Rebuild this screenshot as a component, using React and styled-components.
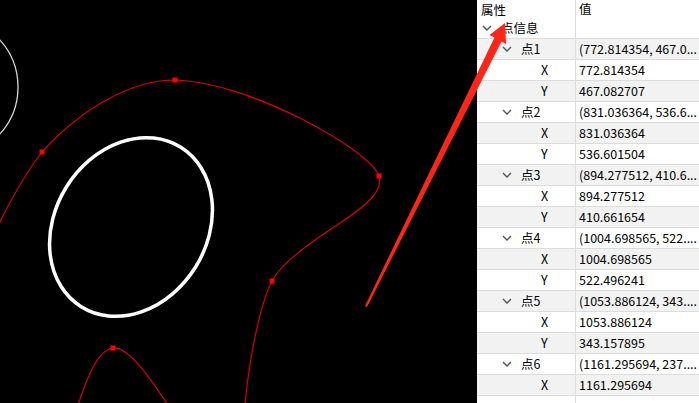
import React from "react"
import styled, { createGlobalStyle } from "styled-components"

const GlobalStyle = createGlobalStyle`
  html, body {
    margin: 0;
    padding: 0;
    background: #fff;
    overflow: hidden;
  }
`

const Screen = styled.div`
  position: relative;
  width: 699px;
  height: 403px;
  display: flex;
  overflow: hidden;
  font-family: "Noto Sans CJK SC", "Noto Sans", sans-serif;
  font-size: 12.5px;
  color: #000;
`

const Canvas = styled.svg`
  display: block;
  width: 477px;
  height: 403px;
  flex: none;
  background: #000;
`

const Grid = styled.div`
  flex: 1;
  display: flex;
  flex-direction: column;
  background: #fff;
  min-width: 0;
`

const Row = styled.div`
  display: grid;
  grid-template-columns: 99px 1fr;
  height: ${p => (p.$header ? "18px" : "20px")};
  flex: none;
  background: ${p => (p.$shade ? "#f2f2f2" : "#fff")};
  border-bottom: ${p => (p.$header ? "none" : "1px solid #dcdcdc")};
`

const NameCell = styled.div`
  display: flex;
  align-items: center;
  padding-left: ${p => 4 + p.$level * 20}px;
  border-right: 1px solid #dcdcdc;
  white-space: nowrap;
  line-height: ${p => (p.$header ? "17px" : "20px")};
  align-self: stretch;
`

const ValueCell = styled.div`
  padding-left: 3px;
  white-space: nowrap;
  overflow: hidden;
  line-height: ${p => (p.$header ? "17px" : "20px")};
`

const Toggle = styled.svg`
  width: 12px;
  height: 8px;
  margin-right: 8px;
  flex: none;
`

const Spacer = styled.span`
  display: inline-block;
  width: 20px;
  flex: none;
`

const Overlay = styled.svg`
  position: absolute;
  left: 0;
  top: 0;
  width: 699px;
  height: 403px;
  pointer-events: none;
`

const rows = [
  { name: "点信息", level: 0, open: true, value: "" },
  { name: "点1", level: 1, open: true, value: "(772.814354, 467.0..." },
  { name: "X", level: 2, value: "772.814354" },
  { name: "Y", level: 2, value: "467.082707" },
  { name: "点2", level: 1, open: true, value: "(831.036364, 536.6..." },
  { name: "X", level: 2, value: "831.036364" },
  { name: "Y", level: 2, value: "536.601504" },
  { name: "点3", level: 1, open: true, value: "(894.277512, 410.6..." },
  { name: "X", level: 2, value: "894.277512" },
  { name: "Y", level: 2, value: "410.661654" },
  { name: "点4", level: 1, open: true, value: "(1004.698565, 522...." },
  { name: "X", level: 2, value: "1004.698565" },
  { name: "Y", level: 2, value: "522.496241" },
  { name: "点5", level: 1, open: true, value: "(1053.886124, 343...." },
  { name: "X", level: 2, value: "1053.886124" },
  { name: "Y", level: 2, value: "343.157895" },
  { name: "点6", level: 1, open: true, value: "(1161.295694, 237...." },
  { name: "X", level: 2, value: "1161.295694" },
  { name: "", level: 2, value: "" },
]

const markers = [
  [42, 152],
  [175, 80],
  [379, 176],
  [272, 281],
  [113, 348],
]

const Chevron = () => (
  <Toggle viewBox="0 0 12 8">
    <polyline points="2,2 6,6 10,2" fill="none" stroke="#555" strokeWidth="1.4" />
  </Toggle>
)

const Drawing = () => (
  <Canvas viewBox="0 0 477 403">
    <circle cx="-52" cy="87" r="70" fill="none" stroke="#d8d8d8" strokeWidth="1.3" />
    <ellipse
      cx="131"
      cy="227"
      rx="76"
      ry="94"
      transform="rotate(32 131 227)"
      fill="none"
      stroke="#fff"
      strokeWidth="3.5"
    />
    <path
      d="M -5 232 C 8 205, 22 178, 42 152 C 80 110, 130 80, 175 80 C 250 82, 370 150, 379 176 C 383 190, 370 203, 340 223 C 305 246, 280 265, 272 281 C 262 300, 250 350, 245 405"
      fill="none"
      stroke="#d40000"
      strokeWidth="1.2"
    />
    <path
      d="M 78 405 C 88 375, 98 350, 113 348 C 128 346, 150 378, 168 405"
      fill="none"
      stroke="#d40000"
      strokeWidth="1.2"
    />
    {markers.map(([x, y]) => (
      <rect key={x} x={x - 2.5} y={y - 2.5} width="5" height="5" fill="#ff0000" />
    ))}
  </Canvas>
)

export default function App() {
  return (
    <Screen>
      <GlobalStyle />
      <Drawing />
      <Grid>
        <Row $header>
          <NameCell $level={0} $header>属性</NameCell>
          <ValueCell $header>值</ValueCell>
        </Row>
        {rows.map((r, i) => (
          <Row key={i} $shade={i % 2 === 1}>
            <NameCell $level={r.level}>
              {r.open ? <Chevron /> : r.level === 2 ? <Spacer /> : null}
              {r.name}
            </NameCell>
            <ValueCell>{r.value}</ValueCell>
          </Row>
        ))}
      </Grid>
      <Overlay viewBox="0 0 699 403">
        <polygon
          points="505,23 506,44 501.5,41.5 367,307 365,306 494.5,37.5 489.5,35"
          fill="#ff2517"
        />
      </Overlay>
    </Screen>
  )
}
